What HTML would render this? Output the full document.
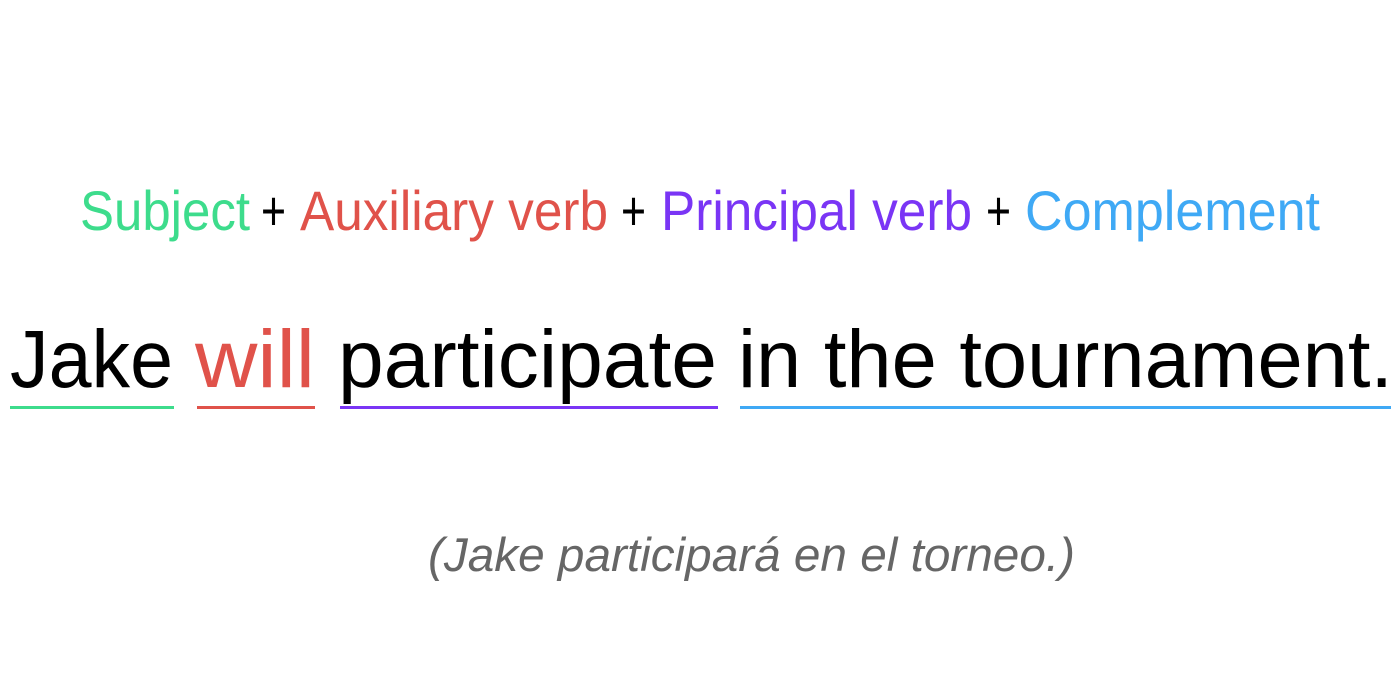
<!DOCTYPE html>
<html><head><meta charset="utf-8"><style>
html,body{margin:0;padding:0;background:#fff;width:1400px;height:700px;overflow:hidden}
svg{display:block}
text{font-family:"Liberation Sans",sans-serif}
</style></head><body>
<svg width="1400" height="700" viewBox="0 0 1400 700" xmlns="http://www.w3.org/2000/svg">
<g font-size="56">
<text x="80" y="230" fill="#3ddc8c" textLength="170" lengthAdjust="spacingAndGlyphs">Subject</text>
<text x="261" y="230" fill="#000" textLength="25" lengthAdjust="spacingAndGlyphs">+</text>
<text x="300" y="230" fill="#e0524a" textLength="308" lengthAdjust="spacingAndGlyphs">Auxiliary verb</text>
<text x="621" y="230" fill="#000" textLength="25" lengthAdjust="spacingAndGlyphs">+</text>
<text x="661" y="230" fill="#7a35f5" textLength="311" lengthAdjust="spacingAndGlyphs">Principal verb</text>
<text x="986" y="230" fill="#000" textLength="25" lengthAdjust="spacingAndGlyphs">+</text>
<text x="1025" y="230" fill="#3fa9f5" textLength="295" lengthAdjust="spacingAndGlyphs">Complement</text>
</g>
<g font-size="82">
<text x="10" y="387" fill="#000" textLength="163" lengthAdjust="spacingAndGlyphs">Jake</text>
<text x="195" y="387" fill="#e0524a" textLength="120" lengthAdjust="spacingAndGlyphs">will</text>
<text x="338" y="387" fill="#000" textLength="379" lengthAdjust="spacingAndGlyphs">participate</text>
<text x="738" y="387" fill="#000" textLength="655" lengthAdjust="spacingAndGlyphs">in the tournament.</text>
</g>
<rect x="10" y="406" width="164" height="3" fill="#3ddc8c"/>
<rect x="197" y="406" width="118" height="3" fill="#e0524a"/>
<rect x="340" y="406" width="378" height="3" fill="#7a35f5"/>
<rect x="740" y="406" width="651" height="3" fill="#3fa9f5"/>
<text x="428" y="571" font-size="47" font-style="italic" fill="#666" textLength="647" lengthAdjust="spacingAndGlyphs">(Jake participará en el torneo.)</text>
</svg>
</body></html>
